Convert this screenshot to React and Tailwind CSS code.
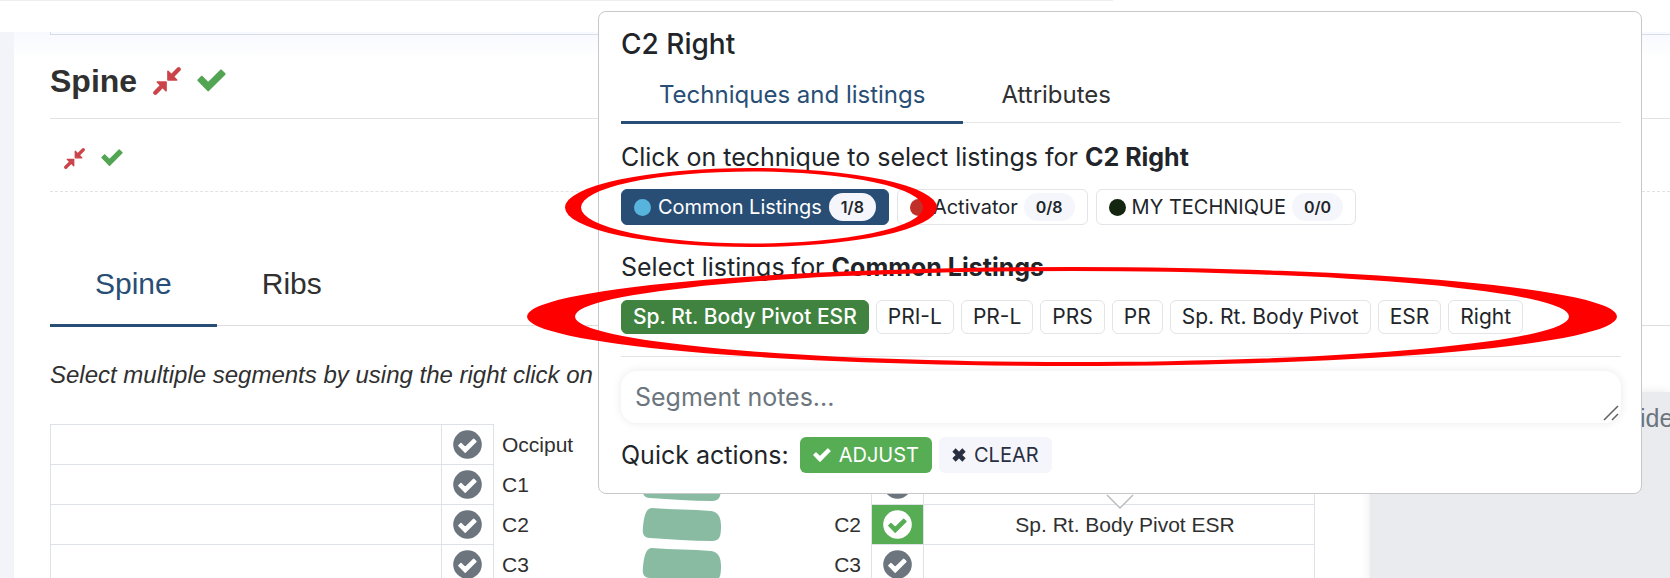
import { useState } from "react";

const techniques = [
    { name: "Common Listings", color: "bg-[#57b4dc]", count: "1/8" },
    { name: "Activator", color: "bg-[#c03028]", count: "0/8" },
    { name: "MY TECHNIQUE", color: "bg-[#14260f]", count: "0/0" },
];

const listings = ["Sp. Rt. Body Pivot ESR", "PRI-L", "PR-L", "PRS", "PR", "Sp. Rt. Body Pivot", "ESR", "Right"];

const segments = [
    { left: "Occiput" },
    { left: "C1", bone: true },
    { left: "C2", bone: true, right: "C2", listing: "Sp. Rt. Body Pivot ESR" },
    { left: "C3", bone: true, right: "C3" },
];

const checkPath = "M1.4 11.2 L4.8 7.8 L11.2 14.2 L24 1.4 L27.6 5 L11.2 21.4Z";

function CheckIcon({ className }) {
    return (
        <svg className={className} viewBox="0 0 29 23" aria-hidden="true">
            <path d={checkPath} fill="currentColor" stroke="currentColor" strokeWidth="2" strokeLinejoin="round" />
        </svg>
    );
}

function CheckCircle({ checkColor }) {
    return (
        <svg className="size-[29px]" viewBox="0 0 29 29" aria-hidden="true">
            <circle cx="14.5" cy="14.5" r="14.3" fill="currentColor" />
            <path d={checkPath} transform="translate(4.8 8.2) scale(0.66)" fill={checkColor} stroke={checkColor} strokeWidth="2" strokeLinejoin="round" />
        </svg>
    );
}

function CompressIcon({ className }) {
    return (
        <svg className={className} viewBox="0 0 84 84" fill="currentColor" stroke="currentColor" strokeLinejoin="round" strokeLinecap="round" aria-hidden="true">
            <path d="M45 13 V39 H71Z M39 45 V71 L13 45Z" strokeWidth="5" />
            <path d="M77 7 L55 29 M7 77 L29 55" strokeWidth="13" />
        </svg>
    );
}

function CrossIcon({ className }) {
    return (
        <svg className={className} viewBox="0 0 14 14" stroke="currentColor" strokeWidth="4.6" aria-hidden="true">
            <path d="M2 2 L12 12 M12 2 L2 12" />
        </svg>
    );
}

function Vertebra() {
    return (
        <svg className="h-9 w-20" viewBox="0 0 80 36" aria-hidden="true">
            <path d="M10 1 C30 3 50 2 69 4 C76 5 79 10 79 19 C79 29 78 34 70 34 C50 34 28 32 8 31 C2 31 0 27 1 20 C2 9 4 1 10 1Z" fill="#89bba2" />
        </svg>
    );
}

function SegmentRow({ segment }) {
    return (
        <tr className="h-10">
            <td className="border border-[#dee2e6]"></td>
            <td className="border border-[#dee2e6] p-0">
                <button aria-label={segment.left + " left"} className="mx-auto block text-[#6c757d]">
                    <CheckCircle checkColor="#fff" />
                </button>
            </td>
            <td className="p-0">
                <div className="flex items-center pr-2.5 pl-2 leading-9">
                    <span className="flex-1">{segment.left}</span>
                    {segment.bone && <Vertebra />}
                    <span className="flex-1 text-right">{segment.right}</span>
                </div>
            </td>
            <td className={segment.listing ? "border border-[#dee2e6] bg-[#56ad54] p-0" : "border border-[#dee2e6] p-0"}>
                <button aria-label={segment.left + " right"} className={segment.listing ? "mx-auto block text-white" : "mx-auto block text-[#6c757d]"}>
                    <CheckCircle checkColor={segment.listing ? "#56ad54" : "#fff"} />
                </button>
            </td>
            <td className="border border-[#dee2e6] py-0 pl-3 text-center">{segment.listing}</td>
        </tr>
    );
}

function SegmentPopup() {
    const [technique, setTechnique] = useState("Common Listings");
    const [selected, setSelected] = useState(["Sp. Rt. Body Pivot ESR"]);
    const [notes, setNotes] = useState("");

    const toggleListing = (name) => {
        setSelected(selected.includes(name) ? selected.filter((item) => item !== name) : [...selected, name]);
    };

    return (
        <div className="absolute top-[11px] right-7 left-[598px] rounded-lg border border-[#c8c8ca] bg-white pt-3 pr-5 pb-5 pl-[22px] font-['Inter',sans-serif] text-[25px] text-[#212529]">
            <h2 className="text-[28px] leading-10 font-medium">C2 Right</h2>
            <div className="flex border-b border-[#e4e6e8] text-2xl" role="tablist">
                <button role="tab" aria-selected="true" className="-mb-0.5 h-[60px] border-b-3 border-[#284e75] px-[38px] pt-1 text-[#284e75]">Techniques and listings</button>
                <button role="tab" aria-selected="false" className="px-[38px] pt-1 text-[#303030]">Attributes</button>
            </div>

            <p className="mt-4 leading-9">Click on technique to select listings for <b>C2 Right</b></p>
            <div className="mt-3.5 flex flex-wrap gap-2">
                {techniques.map((item) => (
                    <button
                        key={item.name}
                        onClick={() => setTechnique(item.name)}
                        className={item.name === technique
                            ? "flex h-9 items-center gap-[7px] rounded-md border border-[#284e75] bg-[#284e75] px-3 text-xl text-white"
                            : "flex h-9 items-center gap-1.5 rounded-md border border-[#e2e4e8] bg-white px-3 text-xl"}
                    >
                        <span className={"size-[17px] rounded-full " + item.color}></span>
                        {item.name}
                        <span className="rounded-full bg-[#f5f6fb] px-3 text-base leading-7 font-semibold text-[#212529]">{item.count}</span>
                    </button>
                ))}
            </div>

            <p className="mt-6 leading-9">Select listings for <b>{technique}</b></p>
            <div className="mt-[15px] flex flex-wrap gap-[7px]">
                {listings.map((name) => (
                    <button
                        key={name}
                        onClick={() => toggleListing(name)}
                        className={selected.includes(name)
                            ? "h-[34px] rounded-md border border-[#408340] bg-[#408340] px-[11px] text-[21px] leading-8 font-medium text-white"
                            : "h-[34px] rounded-md border border-[#e2e4e8] bg-white px-[11px] text-[21px] leading-8"}
                    >
                        {name}
                    </button>
                ))}
            </div>

            <hr className="mt-[22px] border-[#e2e4e8]" />
            <div className="relative mt-3.5">
                <textarea
                    rows={1}
                    aria-label="Segment notes"
                    placeholder="Segment notes..."
                    value={notes}
                    onChange={(e) => setNotes(e.target.value)}
                    className="block h-[52px] w-full resize-none rounded-2xl px-3.5 py-2 leading-9 shadow-[0_0_10px_rgba(0,0,0,0.09)] placeholder:text-[#6c757d]"
                />
                <svg className="pointer-events-none absolute right-0.5 bottom-0.5 size-4" viewBox="0 0 16 16" stroke="#606060" strokeWidth="1.5" aria-hidden="true">
                    <path d="M1 15 L15 1 M9 15 L15 9" />
                </svg>
            </div>
            <div className="mt-3.5 flex items-center gap-[7px] leading-9">
                <span className="mr-1">Quick actions:</span>
                <button className="flex h-9 items-center gap-2 rounded-md bg-[#56ad54] px-[13px] text-xl text-white">
                    <CheckIcon className="w-[18px]" />
                    ADJUST
                </button>
                <button className="flex h-9 items-center gap-2 rounded-md bg-[#f5f6fb] px-[13px] text-xl text-[#282f40]">
                    <CrossIcon className="size-3.5" />
                    CLEAR
                </button>
            </div>

            {/* pointer to the segment row */}
            <svg className="absolute top-full left-1/2 -ml-3.5 h-4 w-7" viewBox="0 0 28 16" aria-hidden="true">
                <path d="M1 2 L14 15 L27 2" fill="#fff" stroke="#bbbdc0" strokeWidth="1.5" />
            </svg>
        </div>
    );
}

export default function App() {
    return (
        <div className="relative min-h-screen overflow-hidden bg-white font-['Liberation_Sans',Arial,sans-serif] text-[21px] text-[#303030]">
            <div className="h-8">
                <div className="w-2/3 border-t border-[#eeeeee]"></div>
            </div>
            <div className="border-l-[14px] border-[#f2f4fa] bg-linear-to-b from-[#f8f9fe] to-white to-5% pl-9">
                <div className="h-[3px] border-b border-l border-[#d9ddea]"></div>
                <div className="flex h-[84px] items-center gap-4 border-b border-[#e2e2e4] pt-2">
                    <h1 className="text-[32px] leading-10 font-bold">Spine</h1>
                    <button aria-label="Collapse spine" className="text-[#cb444a]"><CompressIcon className="size-7" /></button>
                    <button aria-label="Adjust spine" className="text-[#52a552]"><CheckIcon className="w-[29px]" /></button>
                </div>
                <div className="flex h-[73px] items-center gap-4 border-b border-dashed border-[#e2e2e4] px-3.5 pt-1.5">
                    <button aria-label="Collapse section" className="text-[#cb444a]"><CompressIcon className="size-[21px]" /></button>
                    <button aria-label="Adjust section" className="text-[#52a552]"><CheckIcon className="w-[22px]" /></button>
                </div>
                <div className="mt-[50px] flex h-[84px] border-b border-[#dddddd] text-[30px]" role="tablist">
                    <button role="tab" aria-selected="true" className="-mb-0.5 border-b-3 border-[#284e75] px-[45px] text-[#284e75]">Spine</button>
                    <button role="tab" aria-selected="false" className="px-[45px]">Ribs</button>
                </div>
                <div className="flex gap-[55px]">
                    <div className="flex-1">
                        <p className="mt-[31px] text-2xl leading-9 italic">Select multiple segments by using the right click on</p>
                        <table className="mt-[31px] w-full table-fixed border-collapse">
                            <colgroup>
                                <col />
                                <col className="w-[52px]" />
                                <col className="w-[378px]" />
                                <col className="w-[52px]" />
                                <col />
                            </colgroup>
                            <tbody>
                                {segments.map((segment) => (
                                    <SegmentRow key={segment.left} segment={segment} />
                                ))}
                            </tbody>
                        </table>
                    </div>
                    <aside className="mt-[66px] w-[300px] bg-[#e9ebef] pt-2 pl-[270px] text-[25px] leading-9 whitespace-nowrap text-[#6c757d] shadow-[0_0_10px_rgba(0,0,0,0.09)]">
                        ide
                    </aside>
                </div>
            </div>

            <SegmentPopup />

            {/* highlight rings drawn over the popup */}
            <svg className="pointer-events-none absolute top-40 left-[520px] h-[210px] w-[1100px]" viewBox="520 160 1100 210" aria-hidden="true">
                <path fill="#ff0000" fillRule="evenodd" d="M565 207.5a186 39.5 0 1 0 372 0a186 39.5 0 1 0 -372 0Z M581 207.5a171 36 0 1 0 342 0a171 36 0 1 0 -342 0Z" />
                <path fill="#ff0000" fillRule="evenodd" d="M527 316.5a545 49.5 0 1 0 1090 0a545 49.5 0 1 0 -1090 0Z M575 316.5a497 45.5 0 1 0 994 0a497 45.5 0 1 0 -994 0Z" />
            </svg>
        </div>
    );
}
